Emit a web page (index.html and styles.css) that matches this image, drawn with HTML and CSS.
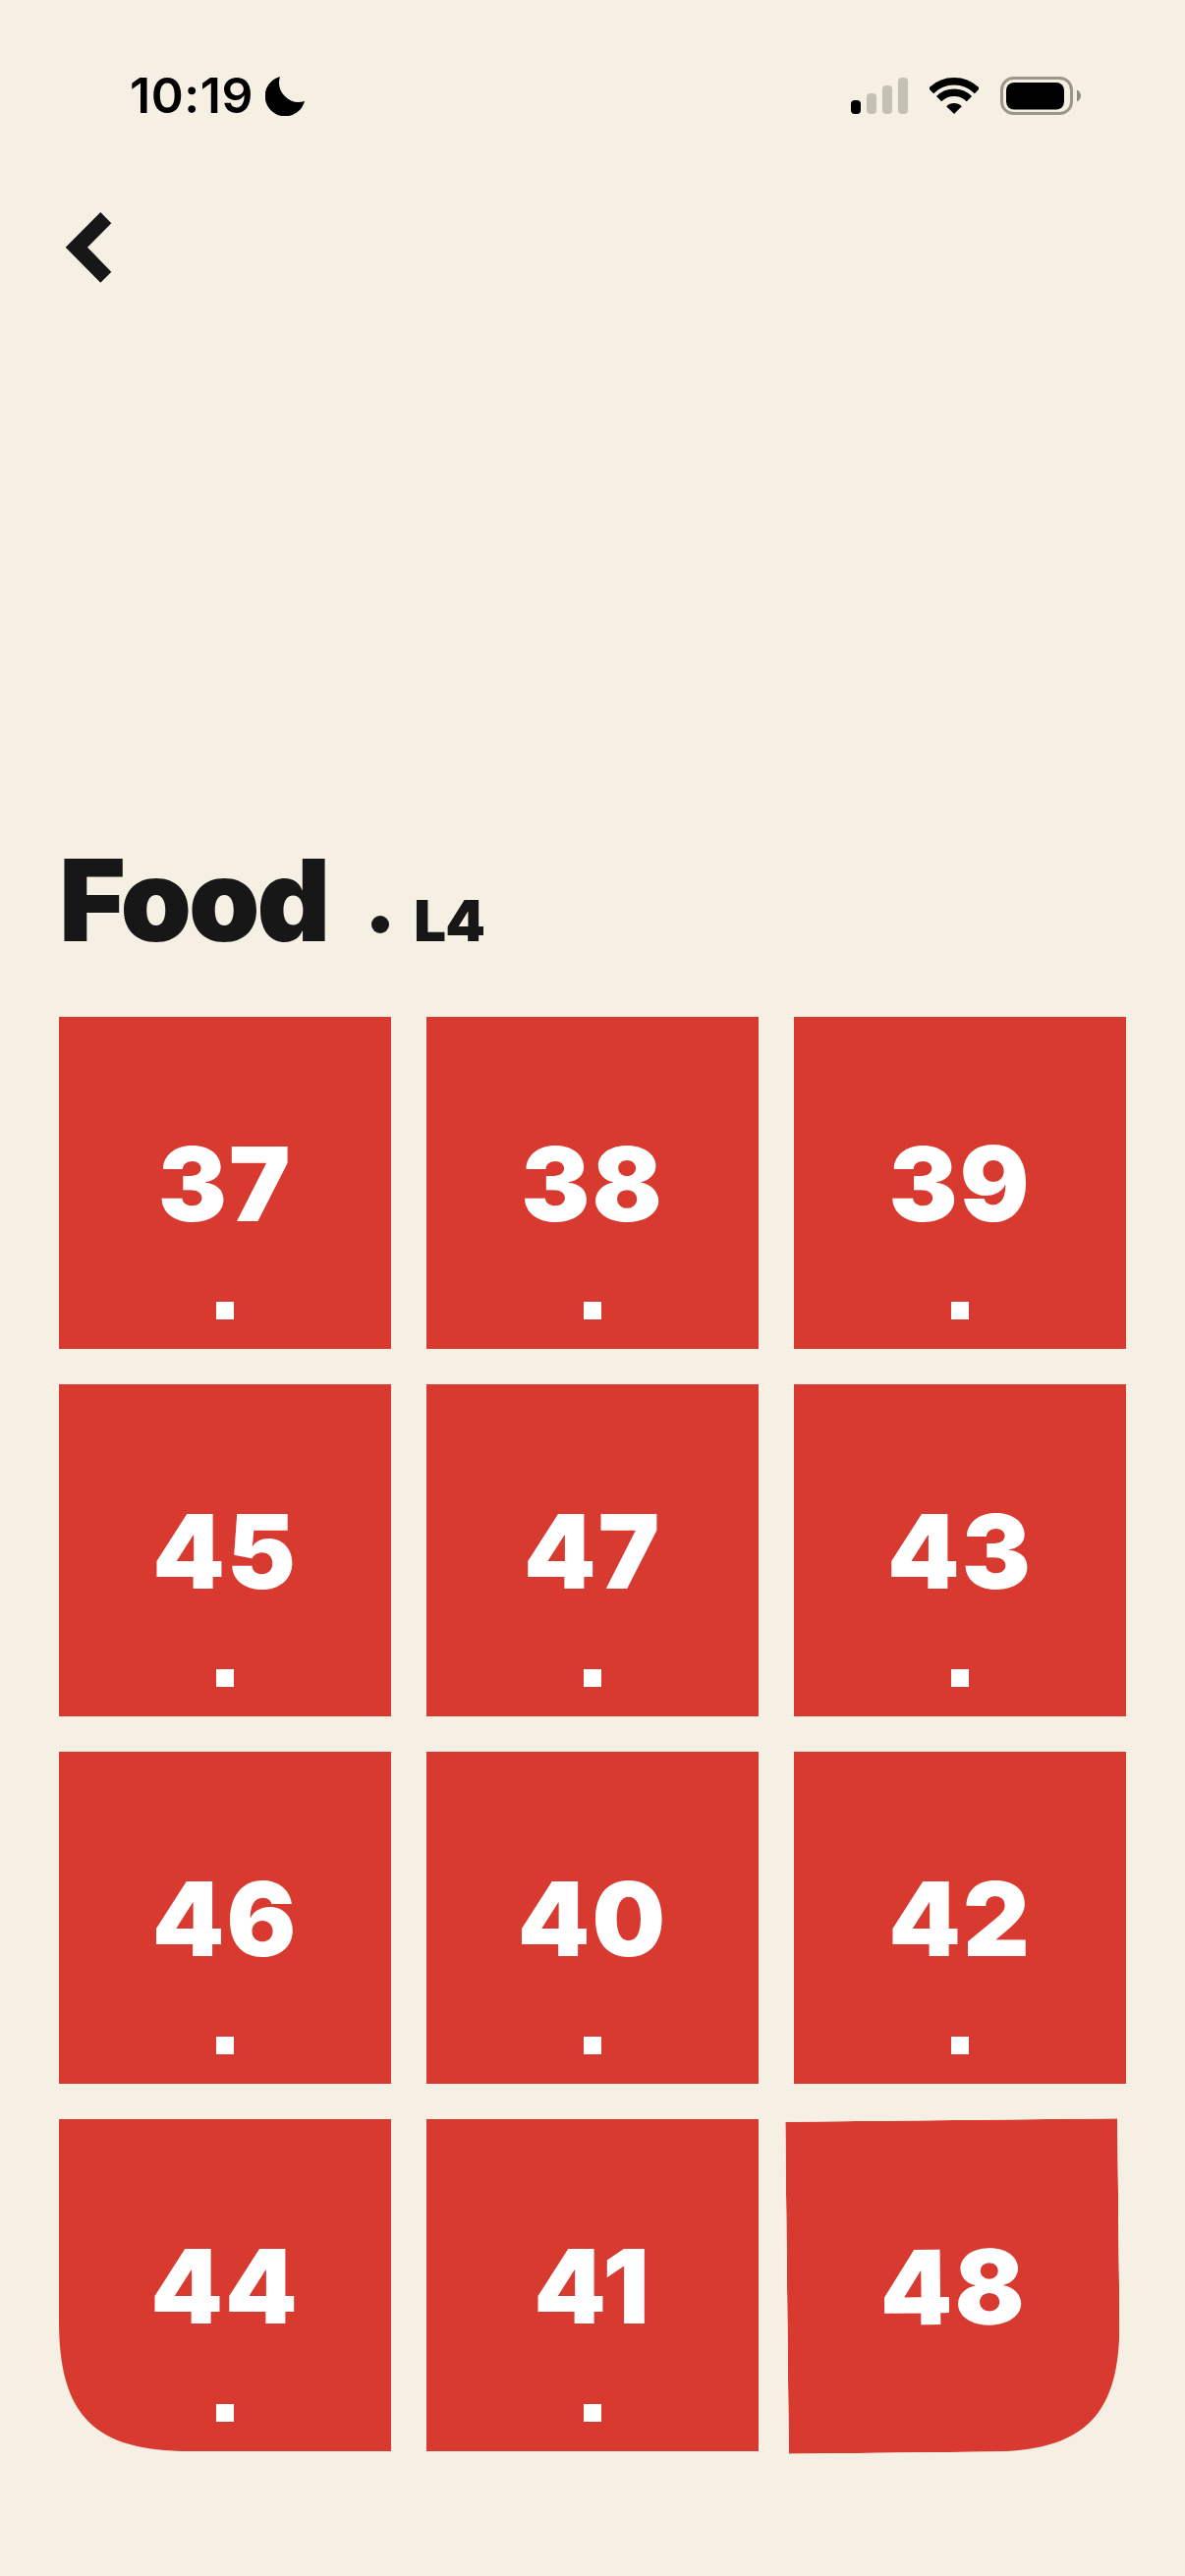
FILE: index.html
```html
<!DOCTYPE html>
<html lang="en">
<head>
    <meta charset="UTF-8">
    <meta name="viewport" content="width=device-width, initial-scale=1.0">
    <title>Food L4</title>
    <link rel="stylesheet" href="styles.css">
</head>
<body>
    <div class="status-bar">
        <div class="status-left">
            <span class="time">10:19</span>
            <svg class="moon" viewBox="0 0 40 40"><path d="M15 0A20.500 20.500 0 1 0 40 25A20 20 0 0 1 15 0Z"/></svg>
        </div>
        <div class="status-right">
            <svg class="signal" viewBox="0 0 58 37">
                <rect x="0" y="23" width="10" height="14" rx="4" fill="#000"/>
                <rect x="16" y="16" width="10" height="21" rx="4"/>
                <rect x="32" y="8" width="10" height="29" rx="4"/>
                <rect x="48" y="0" width="10" height="37" rx="4"/>
            </svg>
            <svg class="wifi" viewBox="0 0 50 37">
                <path class="wifi-arc" d="M1.500 13.500A33.200 33.200 0 0 1 48.500 13.500"/>
                <path class="wifi-arc" d="M9.600 21.600A21.800 21.800 0 0 1 40.400 21.600"/>
                <path d="M25 37L17.200 29.200A11 11 0 0 1 32.800 29.200Z"/>
            </svg>
            <svg class="battery" viewBox="0 0 82 39">
                <rect class="battery-shell" x="1.500" y="1.500" width="71" height="36" rx="12"/>
                <rect x="6" y="6" width="59" height="27.500" rx="8"/>
                <path class="battery-nub" d="M78 13.500C80.500 14.500 82 17 82 19.500C82 22 80.500 24.500 78 25.500Z"/>
            </svg>
        </div>
    </div>

    <div class="back">
        <svg viewBox="0 0 48 72"><polygon points="0.700,35.700 36.300,0 47.300,11.300 23,35.700 47.300,60.700 36.300,71.700"/></svg>
    </div>

    <h1 class="title">
        <span class="title-name">Food</span>
        <span class="title-dot"></span>
        <span class="title-level">L4</span>
    </h1>

    <div class="grid">
        <div class="tile"><span class="num">37</span><i class="mark"></i></div>
        <div class="tile"><span class="num">38</span><i class="mark"></i></div>
        <div class="tile"><span class="num">39</span><i class="mark"></i></div>
        <div class="tile"><span class="num">45</span><i class="mark"></i></div>
        <div class="tile"><span class="num">47</span><i class="mark"></i></div>
        <div class="tile"><span class="num">43</span><i class="mark"></i></div>
        <div class="tile"><span class="num">46</span><i class="mark"></i></div>
        <div class="tile"><span class="num">40</span><i class="mark"></i></div>
        <div class="tile"><span class="num">42</span><i class="mark"></i></div>
        <div class="tile tile-corner-left"><span class="num">44</span><i class="mark"></i></div>
        <div class="tile"><span class="num">41</span><i class="mark"></i></div>
        <div class="tile tile-corner-right tile-moved"><span class="num">48</span></div>
    </div>
</body>
</html>
```

FILE: styles.css
```css
html, body {
    margin: 0;
    height: 2622px;
    overflow: hidden;
}

body {
    background: #f5efe4;
    color: #171717;
    font-family: Inter, "Liberation Sans", sans-serif;
}

.status-bar {
    display: flex;
    justify-content: space-between;
    align-items: flex-start;
    height: 116px;
    padding: 78px 106px 0 132px;
    box-sizing: border-box;
}

.status-left {
    display: flex;
    align-items: center;
    gap: 12px;
    height: 39px;
}

.time {
    color: #000;
    font-size: 50px;
    font-weight: 600;
    line-height: 39px;
    letter-spacing: 0.6px;
}

.moon {
    width: 40px;
    height: 40px;
}

.status-right {
    display: flex;
    align-items: flex-start;
    gap: 22px;
}

.signal {
    width: 58px;
    height: 37px;
    margin-top: 1px;
    fill: #c4c0b3;
}

.wifi {
    width: 50px;
    height: 37px;
    margin-top: 1px;
}

.wifi-arc {
    fill: none;
    stroke: #000;
    stroke-width: 7.500;
}

.battery {
    width: 82px;
    height: 39px;
}

.battery-shell {
    fill: none;
    stroke: #9a978a;
    stroke-width: 3;
}

.battery-nub {
    fill: #8e8b7f;
}

.back {
    height: 72px;
    margin: 100px 0 0 66px;
}

.back svg {
    display: block;
    width: 48px;
    height: 72px;
    fill: #171717;
}

.title {
    display: flex;
    align-items: baseline;
    height: 177px;
    margin: 570px 0 0 60px;
    font-weight: 900;
    line-height: 1;
}

.title-name {
    font-size: 116px;
    letter-spacing: -3px;
}

.title-dot {
    width: 18px;
    height: 18px;
    margin: 0 25px 0 45px;
    border-radius: 50%;
    background: #171717;
    transform: translateY(-8px);
}

.title-level {
    font-size: 58px;
    letter-spacing: -1px;
}

.grid {
    display: grid;
    grid-template-columns: repeat(3, 338px);
    grid-auto-rows: 338px;
    gap: 36px;
    margin: 0 0 0 60px;
}

.tile {
    position: relative;
    display: grid;
    place-items: center;
    background: #d83a30;
    color: #fff;
}

.num {
    font-size: 105px;
    font-weight: 900;
    line-height: 1;
    letter-spacing: 2px;
}

.mark {
    position: absolute;
    left: 160px;
    top: 290px;
    width: 18px;
    height: 18px;
    background: #fff;
}

.tile-corner-left {
    clip-path: path("M0 0H338V338H133C36 338 0 302 0 205Z");
}

.tile-corner-right {
    clip-path: path("M0 0H338V205C338 302 302 338 205 338H0Z");
}

.tile-moved {
    transform: translate(-7px, 1px) rotate(-0.6deg);
}
```
